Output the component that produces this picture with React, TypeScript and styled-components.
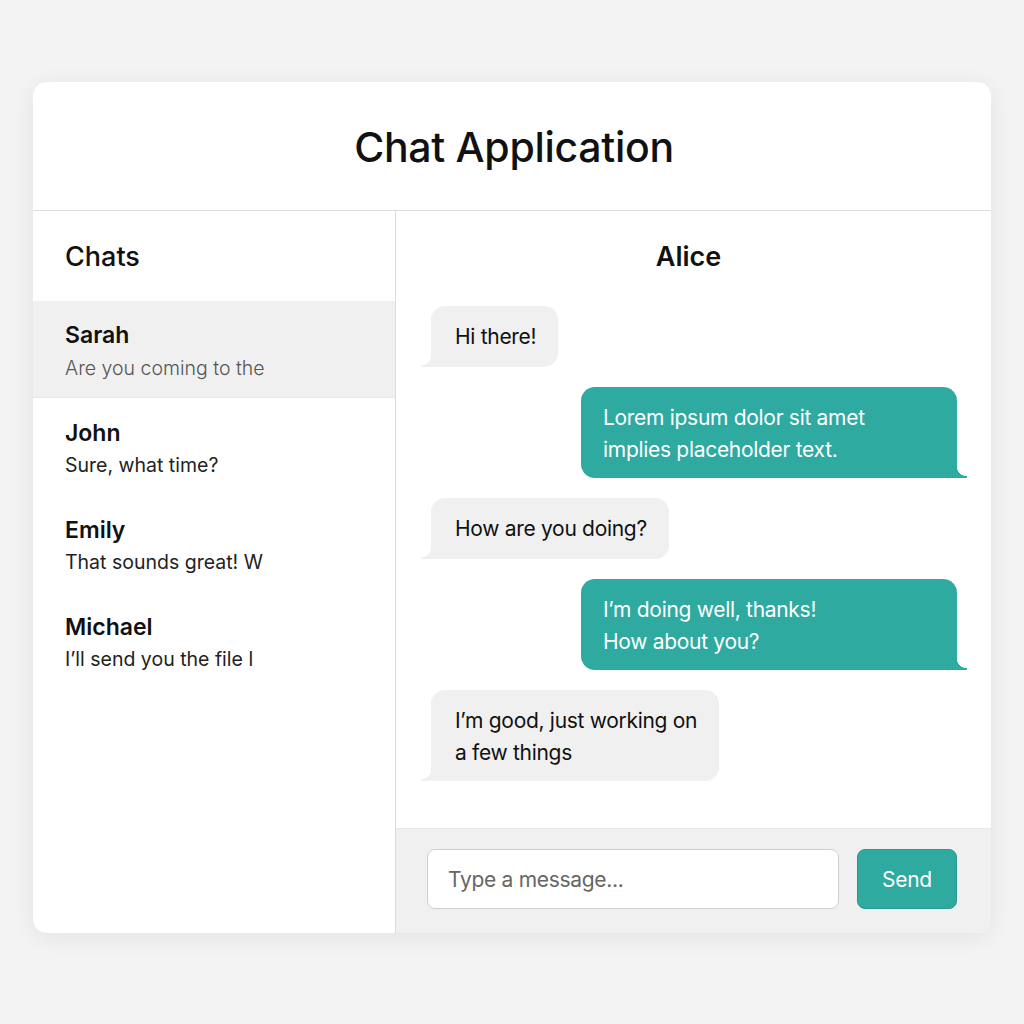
import React from 'react';
import styled, {createGlobalStyle} from "styled-components";

const chats = [
    {name: "Sarah", preview: "Are you coming to the", active: true},
    {name: "John", preview: "Sure, what time?"},
    {name: "Emily", preview: "That sounds great! W"},
    {name: "Michael", preview: "I’ll send you the file l"},
]

const messages = [
    {text: "Hi there!", mine: false},
    {text: "Lorem ipsum dolor sit amet\nimplies placeholder text.", mine: true},
    {text: "How are you doing?", mine: false},
    {text: "I’m doing well, thanks!\nHow about you?", mine: true},
    {text: "I’m good, just working on\na few things", mine: false},
]

const TEAL = "#2eaaa1"
const GREY = "#f0f0f0"

const GlobalStyle = createGlobalStyle`
    body {
        margin: 0;
        background: #f3f3f3;
        font-family: Inter, "Noto Sans", sans-serif;
        color: #111;
    }
`

export default function App() {
    return (
        <Page>
            <GlobalStyle/>
            <Card>
                <Header>Chat Application</Header>
                <Body>
                    <Sidebar>
                        <SidebarTitle>Chats</SidebarTitle>
                        {chats.map((c) => (
                            <ChatItem key={c.name} $active={c.active}>
                                <ChatName>{c.name}</ChatName>
                                <ChatPreview $active={c.active}>{c.preview}</ChatPreview>
                            </ChatItem>
                        ))}
                    </Sidebar>
                    <Conversation>
                        <ConversationTitle>Alice</ConversationTitle>
                        <MessageList>
                            {messages.map((m, i) => (
                                <Bubble key={i} $mine={m.mine}>{m.text}</Bubble>
                            ))}
                        </MessageList>
                        <Composer>
                            <Input placeholder="Type a message..."/>
                            <SendButton>Send</SendButton>
                        </Composer>
                    </Conversation>
                </Body>
            </Card>
        </Page>
    );
}

const Page = styled.div`
    padding: 82px 33px 91px;
`

const Card = styled.div`
    height: 851px;
    background: #fff;
    border-radius: 14px;
    box-shadow: 0 4px 24px rgba(0, 0, 0, 0.07);
    display: flex;
    flex-direction: column;
    overflow: hidden;
`

const Header = styled.h1`
    margin: 0;
    height: 129px;
    flex-shrink: 0;
    display: flex;
    align-items: center;
    justify-content: center;
    padding: 2px 0 0 4px;
    box-sizing: border-box;
    font-size: 41px;
    font-weight: 500;
    letter-spacing: -0.3px;
    border-bottom: 1px solid #dcdcdc;
`

const Body = styled.div`
    flex: 1;
    display: flex;
    min-height: 0;
`

const Sidebar = styled.aside`
    width: 362px;
    border-right: 1px solid #dcdcdc;
    display: flex;
    flex-direction: column;
`

const SidebarTitle = styled.h2`
    margin: 0;
    height: 90px;
    display: flex;
    align-items: center;
    padding-left: 32px;
    font-size: 27px;
    font-weight: 500;
`

const ChatItem = styled.div<{ $active?: boolean }>`
    height: 97px;
    padding: ${p => p.$active ? "18px" : "19px"} 32px 0;
    box-sizing: border-box;
    background: ${p => p.$active ? GREY : "#fff"};
    border-bottom: 1px solid ${p => p.$active ? "#e6e6e6" : "transparent"};
`

const ChatName = styled.div`
    font-size: 23px;
    font-weight: 600;
    line-height: 32px;
`

const ChatPreview = styled.div<{ $active?: boolean }>`
    margin-top: ${p => p.$active ? "1px" : "0"};
    font-size: 19.5px;
    line-height: 32px;
    font-weight: ${p => p.$active ? 300 : 400};
    color: ${p => p.$active ? "#555" : "#222"};
`

const Conversation = styled.section`
    flex: 1;
    display: flex;
    flex-direction: column;
`

const ConversationTitle = styled.h2`
    margin: 0;
    height: 90px;
    display: flex;
    align-items: center;
    justify-content: center;
    padding-right: 10px;
    font-size: 27px;
    font-weight: 600;
`

const MessageList = styled.div`
    flex: 1;
    padding: 5px 34px 0 35px;
    display: flex;
    flex-direction: column;
    gap: 20px;
`

const Bubble = styled.div<{ $mine: boolean }>`
    position: relative;
    align-self: ${p => p.$mine ? "flex-end" : "flex-start"};
    width: ${p => p.$mine ? "376px" : "auto"};
    min-height: 61px;
    box-sizing: border-box;
    padding: ${p => p.$mine ? "15px 22px 12px 22px" : "15px 22px 12px 24px"};
    font-size: 21px;
    line-height: 32px;
    letter-spacing: -0.3px;
    white-space: pre-line;
    color: ${p => p.$mine ? "#fff" : "#111"};
    background: ${p => p.$mine ? TEAL : GREY};
    border-radius: ${p => p.$mine ? "14px 14px 0 14px" : "14px 14px 14px 0"};

    &::after {
        content: "";
        position: absolute;
        bottom: 0;
        width: 10px;
        height: 12px;
        ${p => p.$mine ? "right: -10px;" : "left: -10px;"}
        background: radial-gradient(circle at ${p => p.$mine ? "100% 0" : "0 0"}, transparent 10px, ${p => p.$mine ? TEAL : GREY} 10.5px);
    }
`

const Composer = styled.div`
    height: 105px;
    box-sizing: border-box;
    background: ${GREY};
    border-top: 1px solid #e8e8e8;
    padding: 20px 34px 0 31px;
    display: flex;
    gap: 18px;
`

const Input = styled.input`
    flex: 1;
    height: 60px;
    box-sizing: border-box;
    border: 1px solid #cfcfcf;
    border-radius: 8px;
    background: #fff;
    padding: 0 20px;
    font-family: Inter, "Noto Sans", sans-serif;
    font-size: 21px;
    letter-spacing: -0.3px;
    outline: none;

    &::placeholder {
        color: #666;
    }
`

const SendButton = styled.button`
    width: 100px;
    height: 60px;
    border: 1px solid #28998f;
    border-radius: 8px;
    background: ${TEAL};
    color: #fff;
    font-family: Inter, "Noto Sans", sans-serif;
    font-size: 21px;
    letter-spacing: -0.3px;
`
